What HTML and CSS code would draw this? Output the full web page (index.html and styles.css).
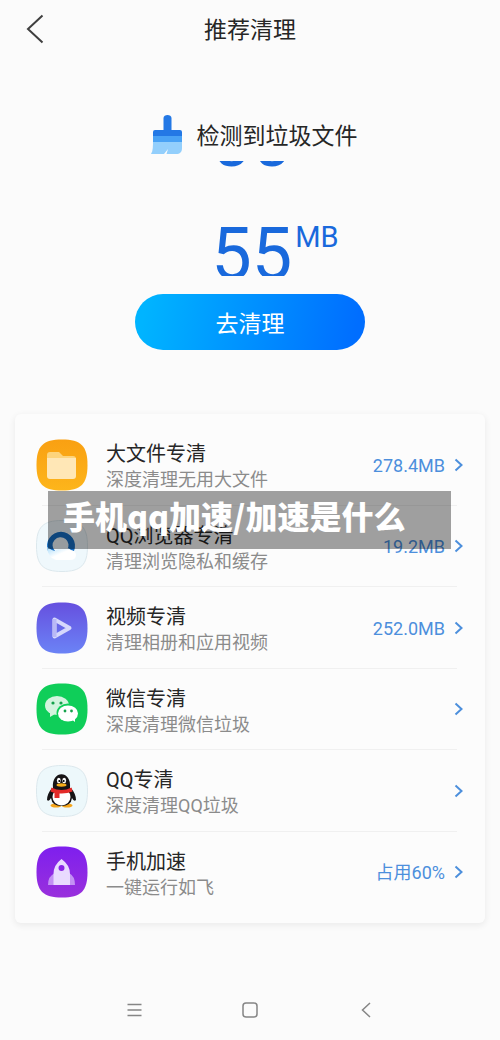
FILE: index.html
```html
<!DOCTYPE html>
<html lang="zh-CN">
<head>
<meta charset="utf-8">
<meta name="viewport" content="width=device-width, initial-scale=1">
<title>推荐清理</title>
<link rel="stylesheet" href="styles.css">
</head>
<body>
<div class="screen">
  <header class="topbar">
    <button class="icon-button back" type="button" aria-label="返回">
      <svg width="20" height="30" viewBox="0 0 20 30" fill="none" stroke="#3f3f3f" stroke-width="2"><path d="M17.500 1.500 3 15l14.500 13.500"/></svg>
    </button>
    <h1 class="title">推荐清理</h1>
  </header>

  <main class="content">
    <section class="summary">
      <h2 class="detected">
        <svg width="34" height="40" viewBox="0 0 34 40">
          <path d="M2 25h29v8c0 4-2 6-6 6h-9.500l1.500-5-4 5H0c2-3 2-8 2-14z" fill="#93cffc"/>
          <path d="M2 18h29v9H2z" fill="#49a2f5"/>
          <path d="M12.500 3c0-4 8-4 8 0v12h8.500q2 0 2 2v4H2v-4q0-2 2-2h8.500z" fill="#2378e5"/>
        </svg>
        <span>检测到垃圾文件</span>
      </h2>
      <div class="counter">
        <div class="reel"><span>00</span><span>55</span></div>
        <span class="unit">MB</span>
      </div>
      <button class="clean" type="button">去清理</button>
    </section>

    <ul class="card">
      <li class="item"><a class="row" href="#files">
        <svg class="app" viewBox="0 0 52 52">
          <defs><linearGradient id="files" x2="0" y2="1"><stop stop-color="#f9a012"/><stop offset="1" stop-color="#fdb51b"/></linearGradient></defs>
          <path d="M26 .5C45 .5 51.500 7 51.500 26S45 51.500 26 51.500.5 45 .5 26 7 .5 26 .5z" fill="url(#files)"/>
          <path d="M11 16q0-3 3-3h9l4 4h10q3 0 3 3v4H11z" fill="#fdd47c"/>
          <path d="M11 19h29v18q0 3-3 3H14q-3 0-3-3z" fill="#ffe7b6"/>
        </svg>
        <span class="text"><span class="name">大文件专清</span><span class="note">深度清理无用大文件</span></span>
        <span class="value">278.4MB</span>
        <svg class="chevron" viewBox="0 0 9 14"><path d="m1.500 1.500 6 5.500-6 5.500"/></svg>
      </a></li>
      <li class="item"><a class="row" href="#browser">
        <svg class="app" viewBox="0 0 52 52">
          <defs><linearGradient id="cloud" x2="1" y2="1"><stop stop-color="#a9dcfb"/><stop offset=".5" stop-color="#fff"/></linearGradient></defs>
          <path d="M26 .5C45 .5 51.500 7 51.500 26S45 51.500 26 51.500.5 45 .5 26 7 .5 26 .5z" fill="#eff8fc" stroke="#dce8ed"/>
          <path d="M12 31A14 14 0 1 1 38 31L31 30A8 8 0 1 0 19 31z" fill="#176fc5"/>
          <path d="M11 27q4 3 8 4 3-3 7-1 5-4 9 0 5 1 5 5 0 5-6 5H20q-8-2-9-13z" fill="url(#cloud)"/>
        </svg>
        <span class="text"><span class="name">QQ浏览器专清</span><span class="note">清理浏览隐私和缓存</span></span>
        <span class="value">19.2MB</span>
        <svg class="chevron" viewBox="0 0 9 14"><path d="m1.500 1.500 6 5.500-6 5.500"/></svg>
      </a></li>
      <li class="item"><a class="row" href="#video">
        <svg class="app" viewBox="0 0 52 52">
          <defs><linearGradient id="video" x2="0" y2="1"><stop stop-color="#6650df"/><stop offset="1" stop-color="#6b83f6"/></linearGradient></defs>
          <path d="M26 .5C45 .5 51.500 7 51.500 26S45 51.500 26 51.500.5 45 .5 26 7 .5 26 .5z" fill="url(#video)"/>
          <path d="M18.500 17.500v17l15-8.500z" fill="none" stroke="#d6d8fc" stroke-width="4" stroke-linejoin="round"/>
          <path d="M18.500 17v18" stroke="#b9b9f6" stroke-width="4"/>
        </svg>
        <span class="text"><span class="name">视频专清</span><span class="note">清理相册和应用视频</span></span>
        <span class="value">252.0MB</span>
        <svg class="chevron" viewBox="0 0 9 14"><path d="m1.500 1.500 6 5.500-6 5.500"/></svg>
      </a></li>
      <li class="item"><a class="row" href="#wechat">
        <svg class="app" viewBox="0 0 52 52">
          <path d="M26 .5C45 .5 51.500 7 51.500 26S45 51.500 26 51.500.5 45 .5 26 7 .5 26 .5z" fill="#0fce59"/>
          <path d="M14 29.500 14 34l5-3z" fill="#d4f4df"/>
          <ellipse cx="21" cy="22.500" rx="12" ry="9.500" fill="#d4f4df"/>
          <ellipse cx="32" cy="30" rx="11.500" ry="9.500" fill="#0fce59"/>
          <path d="m35 36 4 3v-5z" fill="#fff"/>
          <ellipse cx="32" cy="30.500" rx="10" ry="8" fill="#fff"/>
          <g fill="#16a24c"><circle cx="17" cy="20" r="1.600"/><circle cx="25" cy="20" r="1.600"/><circle cx="29" cy="28" r="1.400"/><circle cx="35.500" cy="28" r="1.400"/></g>
        </svg>
        <span class="text"><span class="name">微信专清</span><span class="note">深度清理微信垃圾</span></span>
        <svg class="chevron" viewBox="0 0 9 14"><path d="m1.500 1.500 6 5.500-6 5.500"/></svg>
      </a></li>
      <li class="item"><a class="row" href="#qq">
        <svg class="app" viewBox="0 0 52 52">
          <path d="M26 .5C45 .5 51.500 7 51.500 26S45 51.500 26 51.500.5 45 .5 26 7 .5 26 .5z" fill="#edf8fb" stroke="#dce8ed"/>
          <ellipse cx="20" cy="40.500" rx="5.500" ry="2" fill="#f5a51b"/><ellipse cx="31" cy="40.500" rx="5.500" ry="2" fill="#f5a51b"/>
          <path d="M16 23q-5 6-5 12 2 2 4-2 1 8 10.500 8T36 33q2 4 4 2 0-6-5-12z" fill="#151315"/>
          <ellipse cx="25.500" cy="32" rx="9" ry="8.500" fill="#fff"/>
          <path d="M17 23C15 4.500 36 4.500 34 23c0 4-17 4-17 0z" fill="#171416"/>
          <ellipse cx="22.800" cy="15.500" rx="1.900" ry="2.700" fill="#fff"/><ellipse cx="28.200" cy="15.500" rx="1.900" ry="2.700" fill="#fff"/>
          <circle cx="23.300" cy="16" r="1"/><circle cx="27.700" cy="16" r="1"/>
          <ellipse cx="25.500" cy="20" rx="5" ry="1.700" fill="#f8ae19"/>
          <path d="M15.500 22.500q10 5 20 0l1 4q-6 2.500-13 2v4.500h-5V28l-4-1.500z" fill="#e32b29"/>
        </svg>
        <span class="text"><span class="name">QQ专清</span><span class="note">深度清理QQ垃圾</span></span>
        <svg class="chevron" viewBox="0 0 9 14"><path d="m1.500 1.500 6 5.500-6 5.500"/></svg>
      </a></li>
      <li class="item"><a class="row" href="#boost">
        <svg class="app" viewBox="0 0 52 52">
          <defs><linearGradient id="boost" x2="0" y2="1"><stop stop-color="#7e1fee"/><stop offset="1" stop-color="#9930dc"/></linearGradient></defs>
          <path d="M26 .5C45 .5 51.500 7 51.500 26S45 51.500 26 51.500.5 45 .5 26 7 .5 26 .5z" fill="url(#boost)"/>
          <path d="M19 27q-7 3-7 12h7zM33 27q6 3 6 12h-6z" fill="#c391f4"/>
          <path fill-rule="evenodd" d="M25.500 13q8.500 6 8.500 15v11H17.500V28q0-9 8-15zm0 6a3 3 0 1 0 0 6 3 3 0 0 0 0-6z" fill="#e9daff"/>
        </svg>
        <span class="text"><span class="name">手机加速</span><span class="note">一键运行如飞</span></span>
        <span class="value">占用60%</span>
        <svg class="chevron" viewBox="0 0 9 14"><path d="m1.500 1.500 6 5.500-6 5.500"/></svg>
      </a></li>
    </ul>
  </main>

  <nav class="system">
    <button class="icon-button" type="button" aria-label="最近任务"><svg width="16" height="16" viewBox="0 0 16 16" fill="none" stroke="#858585" stroke-width="1.300"><path d="M1.500 2.500h14M1.500 8h14M1.500 13.500h14"/></svg></button>
    <button class="icon-button" type="button" aria-label="主屏幕"><svg width="16" height="16" viewBox="0 0 16 16" fill="none" stroke="#858585" stroke-width="1.500"><rect x="1" y="1" width="14" height="14" rx="3"/></svg></button>
    <button class="icon-button" type="button" aria-label="返回"><svg width="16" height="16" viewBox="0 0 16 16" fill="none" stroke="#858585" stroke-width="1.500"><path d="m12 1-7.500 7 7.500 7"/></svg></button>
  </nav>

  <p class="caption">手机qq加速/加速是什么</p>
</div>
</body>
</html>
```
FILE: styles.css
```css
* {
  box-sizing: border-box;
}

body {
  margin: 0;
  background: #fbfbfb;
  color: #262626;
  font-family: Roboto, "Noto Sans CJK SC", sans-serif;
}

button {
  border: 0;
  padding: 0;
  background: none;
  font: inherit;
  cursor: pointer;
}

.screen {
  position: relative;
  display: flex;
  flex-direction: column;
  min-height: 100vh;
}

.topbar {
  display: grid;
  grid-template-columns: 1fr auto 1fr;
  align-items: center;
  height: 58px;
  padding: 0 25px;
}

.icon-button {
  display: grid;
  place-items: center;
}

.back {
  justify-self: start;
}

.title,
.detected {
  margin: 0;
  font-size: 23px;
  line-height: 32px;
  font-weight: 400;
}

.title,
.detected span {
  padding-top: 4px;
}

.content {
  flex: 1;
}

.summary {
  display: flex;
  flex-direction: column;
  align-items: center;
  padding-top: 57px;
}

.detected {
  display: flex;
  align-items: center;
  gap: 12px;
  height: 40px;
  margin-right: -8px;
}

.counter {
  display: flex;
  align-items: flex-start;
  gap: 3px;
  height: 115px;
  margin-top: 6px;
  margin-left: 50px;
  overflow: hidden;
  color: #1969dc;
}

.reel {
  display: flex;
  flex-direction: column;
  margin-top: -76px;
  font-size: 72px;
  line-height: 113px;
}

.unit {
  margin-top: 60px;
  font-size: 29px;
  line-height: 32px;
}

.clean {
  width: 46%;
  height: 56px;
  margin-top: 18px;
  border-radius: 28px;
  background: linear-gradient(100deg, #00b4ff 5%, #006eff 95%);
  color: #fff;
  font-size: 23px;
}

.card {
  display: grid;
  grid-auto-rows: 1fr;
  min-height: 509px;
  margin: 64px 15px 0;
  padding: 10px 0;
  border-radius: 6px;
  background: #fcfcfc;
  box-shadow: 0 2px 6px 1px rgba(0, 0, 0, 0.06);
  list-style: none;
}

.item {
  display: grid;
}

.item:not(:last-child) {
  background: linear-gradient(#f0f0f0, #f0f0f0) 27px 100% / calc(100% - 55px) 1px no-repeat;
}

.row {
  display: flex;
  align-items: center;
  padding: 0 22px 0 21px;
  color: inherit;
  text-decoration: none;
}

.app {
  width: 52px;
  height: 52px;
  margin-right: 18px;
}

.text {
  display: flex;
  flex: 1;
  flex-direction: column;
  padding-top: 5px;
  line-height: 26px;
}

.name {
  font-size: 20px;
}

.note {
  color: #8b8b8b;
  font-size: 18px;
}

.value {
  padding-top: 2px;
  color: #4c8fdc;
  font-size: 18px;
  line-height: 26px;
}

.chevron {
  width: 9px;
  height: 14px;
  margin-left: 9px;
  fill: none;
  stroke: #4c8fdc;
  stroke-width: 2;
}

.system {
  display: grid;
  grid-template-columns: repeat(3, 116px);
  justify-content: center;
  height: 60px;
}

.caption {
  position: absolute;
  top: 491px;
  right: 49px;
  left: 48px;
  height: 58px;
  margin: 0;
  padding: 0 15px;
  background: rgba(0, 0, 0, 0.37);
  color: #fff;
  font-family: "Noto Sans CJK SC", sans-serif;
  font-size: 32px;
  font-weight: 900;
  line-height: 48px;
}
```
